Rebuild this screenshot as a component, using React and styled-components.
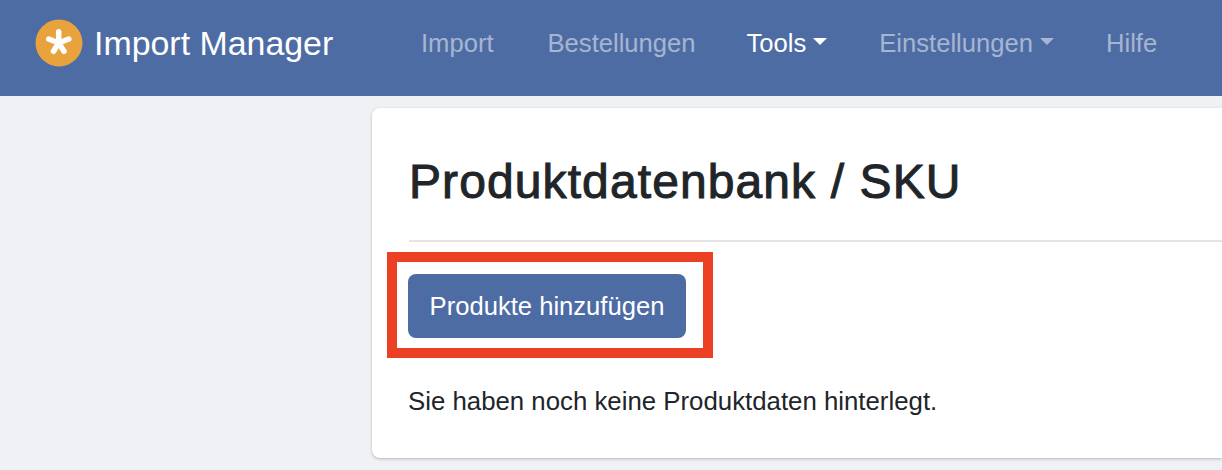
import React from 'react';
import styled, { createGlobalStyle } from 'styled-components';

const GlobalStyle = createGlobalStyle`
    html, body {
        margin:0;
        padding:0;
        height:100%;
        overflow:hidden;
        background-color:#eff1f5;
        font-family:"Liberation Sans", Arial, sans-serif;
        color:#212529;
    }
`;

const Page = styled.div`
    width:1222px;
    height:470px;
    overflow:hidden;
    display:flex;
    flex-direction:column;
`;

const NavBar = styled.nav`
    flex:0 0 96px;
    background-color:#4e6ca4;
    display:flex;
    align-items:flex-start;
    padding:20px 0 0 35px;
    box-sizing:border-box;
`;

const Brand = styled.div`
    display:flex;
    align-items:center;
    gap:11px;
    width:386px;
    flex:none;
    height:46px;
    color:#fff;
    font-size:33.9px;
`;

const Logo = styled.svg`
    width:48px;
    height:48px;
    flex:none;
`;

const NavList = styled.div`
    display:flex;
    align-items:center;
    height:46px;
`;

const NavItem = styled.a`
    display:flex;
    align-items:center;
    font-size:25.6px;
    color:${(p) => (p.$active ? '#ffffff' : 'rgba(255,255,255,.5)')};
    margin-right:${(p) => p.$gap}px;

    &::after {
        content:${(p) => (p.$caret ? '""' : 'none')};
        width:0;
        height:0;
        margin:0 0 4px 7px;
        border-left:7.5px solid transparent;
        border-right:7.5px solid transparent;
        border-top:7.5px solid currentColor;
    }
`;

const Content = styled.main`
    flex:1;
    padding:12px 0 12px 372px;
    display:flex;
    min-height:0;
`;

const Card = styled.section`
    flex:1;
    background-color:#fff;
    border-radius:8px 0 0 8px;
    box-shadow:0 1px 3px rgba(0,0,0,.25);
    padding:44px 0 0 37px;
    box-sizing:border-box;
`;

const Title = styled.h1`
    margin:0;
    font-size:48px;
    line-height:60px;
    font-weight:400;
    letter-spacing:1.1px;
    -webkit-text-stroke:1px #212529;
`;

const Divider = styled.hr`
    margin:28px 0 32px;
    border:0;
    border-top:2px solid #e5e5e5;
`;

const ButtonWrap = styled.div`
    position:relative;
    width:278px;
    margin-left:-1px;
`;

const PrimaryButton = styled.button`
    display:block;
    width:278px;
    height:64px;
    background-color:#4e6ca4;
    border:0;
    border-radius:8px;
    color:#fff;
    font-family:inherit;
    font-size:25.6px;
    padding:0;
`;

const Highlight = styled.div`
    position:absolute;
    top:-22px;
    left:-21px;
    width:326px;
    height:106px;
    box-sizing:border-box;
    border:10px solid #ec4024;
    pointer-events:none;
`;

const Message = styled.p`
    margin:45px 0 0 -1px;
    font-size:25.8px;
    line-height:36px;
    color:#212529;
`;

export default function App() {
    return (
        <Page>
            <GlobalStyle />
            <NavBar>
                <Brand>
                    <Logo viewBox="0 0 48 48">
                        <circle cx="24" cy="24" r="23.5" fill="#e8a33d" />
                        <g stroke="#fff" strokeWidth="5.5" strokeLinecap="round">
                            <line x1="23.7" y1="24" x2="23.7" y2="12.75" />
                            <line x1="23.7" y1="24" x2="33.75" y2="20" />
                            <line x1="23.7" y1="24" x2="29" y2="32.25" />
                            <line x1="23.7" y1="24" x2="18.5" y2="32.25" />
                            <line x1="23.7" y1="24" x2="13.75" y2="20" />
                        </g>
                    </Logo>
                    Import Manager
                </Brand>
                <NavList>
                    <NavItem $gap={54}>Import</NavItem>
                    <NavItem $gap={51}>Bestellungen</NavItem>
                    <NavItem $active $caret $gap={52}>Tools</NavItem>
                    <NavItem $caret $gap={52}>Einstellungen</NavItem>
                    <NavItem $gap={0}>Hilfe</NavItem>
                </NavList>
            </NavBar>
            <Content>
                <Card>
                    <Title>Produktdatenbank / SKU</Title>
                    <Divider />
                    <ButtonWrap>
                        <PrimaryButton>Produkte hinzufügen</PrimaryButton>
                        <Highlight />
                    </ButtonWrap>
                    <Message>Sie haben noch keine Produktdaten hinterlegt.</Message>
                </Card>
            </Content>
        </Page>
    );
}
